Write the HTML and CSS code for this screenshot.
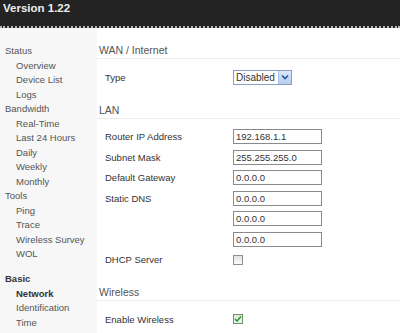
FILE: index.html
```html
<!DOCTYPE html>
<html lang="en">
<head>
  <meta charset="UTF-8" />
  <title>Basic Network</title>
  <link rel="stylesheet" href="styles.css">
</head>
<body>
  <div class="header">Version 1.22</div>

  <div class="main">
    <div class="sidebar">
      <div class="nav-group">Status</div>
      <div class="nav-item">Overview</div>
      <div class="nav-item">Device List</div>
      <div class="nav-item">Logs</div>
      <div class="nav-group">Bandwidth</div>
      <div class="nav-item">Real-Time</div>
      <div class="nav-item">Last 24 Hours</div>
      <div class="nav-item">Daily</div>
      <div class="nav-item">Weekly</div>
      <div class="nav-item">Monthly</div>
      <div class="nav-group">Tools</div>
      <div class="nav-item">Ping</div>
      <div class="nav-item">Trace</div>
      <div class="nav-item">Wireless Survey</div>
      <div class="nav-item">WOL</div>
      <div class="nav-group spaced active">Basic</div>
      <div class="nav-item active">Network</div>
      <div class="nav-item">Identification</div>
      <div class="nav-item">Time</div>
    </div>

    <div class="content">
      <div class="section-title">WAN / Internet</div>
      <div class="fields">
        <div class="field">
          <label>Type</label>
          <div class="select">
            <span class="select-text">Disabled</span>
            <span class="select-btn">
              <svg width="8" height="6" viewBox="0 0 8 6"><path d="M1 1.5 L4 4.5 L7 1.5" fill="none" stroke="#2a4f9a" stroke-width="1.6"/></svg>
            </span>
          </div>
        </div>
      </div>

      <div class="section-title">LAN</div>
      <div class="fields">
        <div class="field"><label>Router IP Address</label><input type="text" value="192.168.1.1"></div>
        <div class="field"><label>Subnet Mask</label><input type="text" value="255.255.255.0"></div>
        <div class="field"><label>Default Gateway</label><input type="text" value="0.0.0.0"></div>
        <div class="field"><label>Static DNS</label><input type="text" value="0.0.0.0"></div>
        <div class="field"><label></label><input type="text" value="0.0.0.0"></div>
        <div class="field"><label></label><input type="text" value="0.0.0.0"></div>
        <div class="field"><label>DHCP Server</label><span class="check"></span></div>
      </div>

      <div class="section-title">Wireless</div>
      <div class="fields">
        <div class="field">
          <label>Enable Wireless</label>
          <span class="check checked">
            <svg width="8" height="8" viewBox="0 0 8 8"><path d="M1 4 L3 6 L7 1.5" fill="none" stroke="#2f9a2f" stroke-width="1.6"/></svg>
          </span>
        </div>
        <div class="field"><label>MAC Address</label><span class="value">00:11:70:F0:05:10</span></div>
      </div>
    </div>
  </div>
</body>
</html>
```

FILE: styles.css
```css
body {
  margin: 0;
  font-family: "Liberation Sans", Arial, sans-serif;
  font-size: 9.5px;
  color: #444;
  background: #fff;
}

.header {
  height: 26px;
  background: #232323;
  border-bottom: 2px dotted #b5b5b5;
  color: #eee;
  font-weight: bold;
  font-size: 11.5px;
  line-height: 17px;
  padding-left: 3px;
  box-sizing: content-box;
}

.main {
  display: flex;
  min-height: 320px;
}

/* left navigation */
.sidebar {
  width: 97px;
  flex-shrink: 0;
  background: #f7f7f7;
  padding-top: 16px;
  color: #555;
  line-height: 14.5px;
}
.nav-group {
  padding-left: 5px;
}
.nav-item {
  padding-left: 16px;
}
.nav-group.spaced {
  margin-top: 10.5px;
}
.active {
  font-weight: bold;
  color: #333;
}

/* form area */
.content {
  flex: 1;
}
.section-title {
  font-size: 10.5px;
  line-height: 16px;
  color: #555;
  padding: 14px 0 0 2px;
  border-bottom: 1px solid #ececec;
}
.fields {
  padding: 8px 0 0 8px;
}
.field {
  display: flex;
  align-items: center;
  height: 20.5px;
  color: #333;
}
.field label {
  width: 128px;
  flex-shrink: 0;
}
input[type="text"] {
  box-sizing: border-box;
  width: 89px;
  height: 15px;
  margin: 0;
  padding: 0 2px;
  border: 1px solid #8a8a8a;
  font-family: "Liberation Sans", Arial, sans-serif;
  font-size: 9.5px;
  color: #333;
  background: #fff;
}
.select {
  display: flex;
  align-items: center;
  box-sizing: border-box;
  width: 59px;
  height: 15px;
  border: 1px solid #8a9fbf;
  background: #fff;
}
.select-text {
  flex: 1;
  padding-left: 2px;
  line-height: 13px;
  font-size: 10px;
}
.select-btn {
  display: flex;
  align-items: center;
  justify-content: center;
  width: 12px;
  height: 13px;
  background: linear-gradient(#dbe7fb, #b7cdf2);
  border-left: 1px solid #a9bfe6;
}
.check {
  display: flex;
  align-items: center;
  justify-content: center;
  box-sizing: border-box;
  width: 10px;
  height: 10px;
  border: 1px solid #8f8f8f;
  background: linear-gradient(#e2e2e2, #fafafa);
}
.check.checked {
  border-color: #6f8f6f;
  background: linear-gradient(#d9ead9, #f4faf4);
}
.value {
  color: #555;
}
```
